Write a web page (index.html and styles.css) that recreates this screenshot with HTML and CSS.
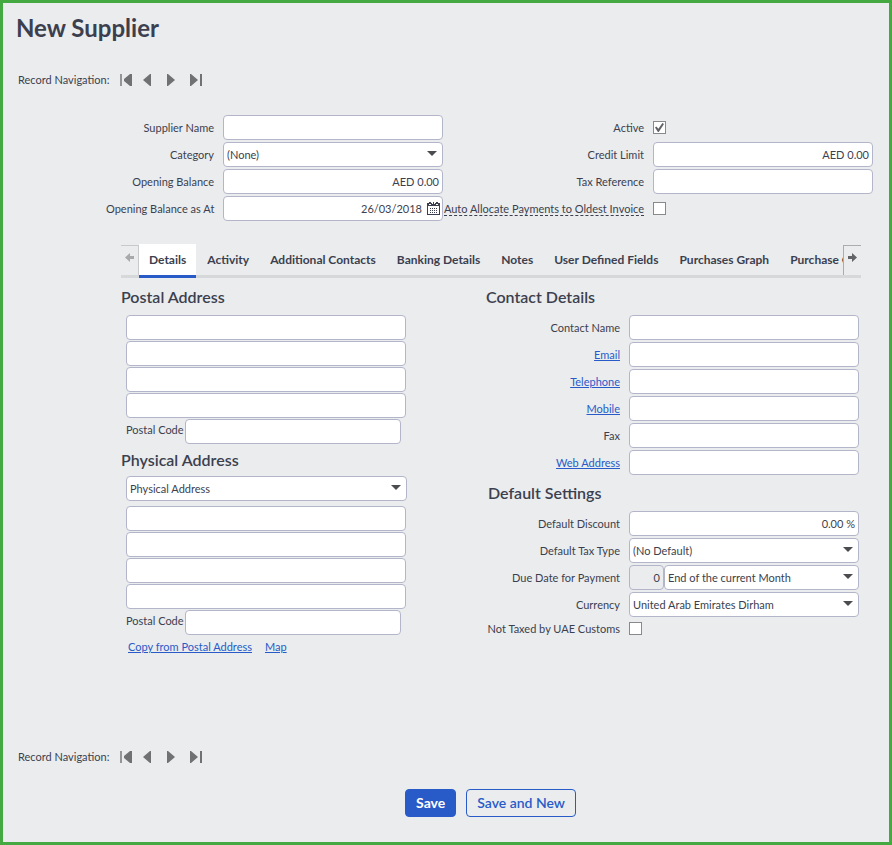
FILE: index.html
```html
<!DOCTYPE html>
<html lang="en">
<head>
<meta charset="utf-8">
<meta name="viewport" content="width=device-width, initial-scale=1">
<title>New Supplier</title>
<link rel="stylesheet" href="styles.css">
</head>
<body>
<svg class="sprite" aria-hidden="true">
  <symbol id="i-first" viewBox="0 0 14 12"><path opacity=".7" d="M2 0H0v12h2z"/><path d="M12 0v12h-2L4 7V5l6-5z"/></symbol>
  <symbol id="i-prev" viewBox="0 0 14 12"><path d="M8 0v12H7L0 6l7-6z"/></symbol>
  <symbol id="i-next" viewBox="0 0 14 12"><path d="M1 0v12h1l7-6-7-6z"/></symbol>
  <symbol id="i-last" viewBox="0 0 14 12"><path d="M1 0v12h1l7-6-7-6zM11 0h2v12h-2z"/></symbol>
</svg>
<main class="page">
  <h1>New Supplier</h1>

  <nav class="record-nav" aria-label="Record navigation, top">
    <span>Record Navigation:</span>
    <button type="button" aria-label="First"><svg><use href="#i-first"/></svg></button>
    <button type="button" aria-label="Previous"><svg><use href="#i-prev"/></svg></button>
    <button type="button" aria-label="Next"><svg><use href="#i-next"/></svg></button>
    <button type="button" aria-label="Last"><svg><use href="#i-last"/></svg></button>
  </nav>

  <form>
    <div class="summary">
      <label for="name">Supplier Name</label>
      <input id="name" type="text">
      <label for="active">Active</label>
      <input id="active" type="checkbox" checked>

      <label for="category">Category</label>
      <div class="select"><select id="category"><option>(None)</option></select></div>
      <label for="credit">Credit Limit</label>
      <input id="credit" class="num" type="text" value="AED 0.00">

      <label for="opening">Opening Balance</label>
      <input id="opening" class="num" type="text" value="AED 0.00">
      <label for="taxref">Tax Reference</label>
      <input id="taxref" type="text">

      <label for="asat">Opening Balance as At</label>
      <div class="date">
        <input id="asat" class="num" type="text" value="26/03/2018">
        <button type="button" aria-label="Choose date">
          <svg viewBox="0 0 13 13"><path fill-rule="evenodd" d="M0 1h2v2h2V1h1v1h3V1h1v2h2V1h2v12H0zM1 4v8h11V4z"/><path d="M2 0h2v2H2zM6 0h1v2H6zM9 0h2v2H9zM3 6h1v1H3zM5 6h1v1H5zM7 6h1v1H7zM9 6h1v1H9zM3 8h1v1H3zM5 8h1v1H5zM7 8h1v1H7zM9 8h1v1H9zM3 10h1v1H3zM5 10h1v1H5zM7 10h1v1H7zM9 10h1v1H9z"/></svg>
        </button>
      </div>
      <label for="auto"><span class="hint">Auto Allocate Payments to Oldest Invoice</span></label>
      <input id="auto" type="checkbox">
    </div>

    <div class="tabbar">
      <button type="button" class="scroll scroll-left" aria-label="Scroll tabs left" disabled><svg viewBox="0 0 9 9"><path d="M0 4.500 5 0v3h4v3H5v3z"/></svg></button>
      <div class="tabs" role="tablist">
        <button type="button" role="tab" aria-selected="true">Details</button>
        <button type="button" role="tab">Activity</button>
        <button type="button" role="tab">Additional Contacts</button>
        <button type="button" role="tab">Banking Details</button>
        <button type="button" role="tab">Notes</button>
        <button type="button" role="tab">User Defined Fields</button>
        <button type="button" role="tab">Purchases Graph</button>
        <button type="button" role="tab">Purchase Graph</button>
      </div>
      <button type="button" class="scroll scroll-right" aria-label="Scroll tabs right"><svg viewBox="0 0 9 9"><path d="M9 4.500 4 0v3H0v3h4v3z"/></svg></button>
    </div>

    <div class="panel">
      <div>
        <section>
          <h2>Postal Address</h2>
          <div class="address">
            <input type="text" aria-label="Postal address line 1">
            <input type="text" aria-label="Postal address line 2">
            <input type="text" aria-label="Postal address line 3">
            <input type="text" aria-label="Postal address line 4">
            <div class="code"><label for="pcode">Postal Code</label><input id="pcode" type="text"></div>
          </div>
        </section>
        <section class="physical">
          <h2>Physical Address</h2>
          <div class="address-type select"><select aria-label="Address type"><option>Physical Address</option></select></div>
          <div class="address">
            <input type="text" aria-label="Physical address line 1">
            <input type="text" aria-label="Physical address line 2">
            <input type="text" aria-label="Physical address line 3">
            <input type="text" aria-label="Physical address line 4">
            <div class="code"><label for="phcode">Postal Code</label><input id="phcode" type="text"></div>
          </div>
          <div class="links"><a href="#">Copy from Postal Address</a><a href="#">Map</a></div>
        </section>
      </div>

      <div>
        <section>
          <h2>Contact Details</h2>
          <div class="fields">
            <label for="contact">Contact Name</label><input id="contact" type="text">
            <label for="email"><a href="#">Email</a></label><input id="email" type="text">
            <label for="tel"><a href="#">Telephone</a></label><input id="tel" type="text">
            <label for="mobile"><a href="#">Mobile</a></label><input id="mobile" type="text">
            <label for="fax">Fax</label><input id="fax" type="text">
            <label for="web"><a href="#">Web Address</a></label><input id="web" type="text">
          </div>
        </section>
        <section class="defaults">
          <h2>Default Settings</h2>
          <div class="fields">
            <label for="discount">Default Discount</label><input id="discount" class="num" type="text" value="0.00 %">
            <label for="taxtype">Default Tax Type</label>
            <div class="select"><select id="taxtype"><option>(No Default)</option></select></div>
            <label for="due">Due Date for Payment</label>
            <div class="due">
              <input id="due" class="num" type="text" value="0" disabled>
              <div class="select"><select aria-label="Due date rule"><option>End of the current Month</option></select></div>
            </div>
            <label for="currency">Currency</label>
            <div class="select"><select id="currency"><option>United Arab Emirates Dirham</option></select></div>
            <label for="nottaxed">Not Taxed by UAE Customs</label><input id="nottaxed" type="checkbox">
          </div>
        </section>
      </div>
    </div>

    <nav class="record-nav" aria-label="Record navigation, bottom">
      <span>Record Navigation:</span>
      <button type="button" aria-label="First"><svg><use href="#i-first"/></svg></button>
      <button type="button" aria-label="Previous"><svg><use href="#i-prev"/></svg></button>
      <button type="button" aria-label="Next"><svg><use href="#i-next"/></svg></button>
      <button type="button" aria-label="Last"><svg><use href="#i-last"/></svg></button>
    </nav>

    <div class="actions">
      <button type="submit" class="btn primary">Save</button>
      <button type="button" class="btn">Save and New</button>
    </div>
  </form>
</main>
</body>
</html>
```
FILE: styles.css
```css
* { box-sizing: border-box; }

body {
  margin: 0;
  background: #eaecee;
  color: #3c3f4e;
  font: 11px/16px Lato, "Liberation Sans", sans-serif;
}

.sprite { position: absolute; width: 0; height: 0; }

.page {
  min-height: 100vh;
  border: 3px solid #43a940;
  padding: 8px 16px 24px 13px;
}

h1 { margin: 0 0 28px; font-size: 24px; line-height: 33px; font-weight: 700; }
h2 { margin: 0 0 8px; font-size: 16px; line-height: 20px; font-weight: 600; }

button, input, select { font: inherit; color: inherit; margin: 0; }
button { padding: 0; border: 0; background: none; cursor: pointer; }
a { color: #285bc8; text-decoration: underline; }

.record-nav { display: flex; align-items: center; padding-left: 2px; }
.record-nav span { margin-right: 11px; }
.record-nav button { display: flex; margin-right: 9px; }
.record-nav svg { width: 14px; height: 12px; fill: #707173; }

input[type="text"], select {
  display: block;
  width: 100%;
  min-width: 0;
  height: 25px;
  padding: 0 3px;
  border: 1px solid #b3b5ca;
  border-radius: 4px;
  background: #fff;
}
input[type="text"]:disabled { background: #eaecee; }
.num { text-align: right; }

input[type="checkbox"] {
  appearance: none;
  display: block;
  width: 13px;
  height: 13px;
  border: 1px solid #88898b;
  background: #fff;
}
input[type="checkbox"]:checked::before {
  content: "";
  display: block;
  width: 9px;
  height: 9px;
  margin: 1px;
  background: #626366;
  clip-path: polygon(0 50%, 15% 40%, 38% 65%, 82% 0, 100% 12%, 42% 100%, 32% 100%);
}

.select { position: relative; min-width: 0; }
.select select { appearance: none; }
.select::after {
  content: "";
  position: absolute;
  right: 6px;
  top: 9px;
  border: 5px solid transparent;
  border-top-color: #4b4c50;
  border-bottom: 0;
  pointer-events: none;
}

.summary {
  display: grid;
  grid-template-columns: 117px 1fr 210px 1fr;
  row-gap: 2px;
  grid-auto-rows: 25px;
  align-items: center;
  margin: 27px 0 0 90px;
}
.summary label, .fields label { padding-right: 9px; text-align: right; white-space: nowrap; }
.hint { border-bottom: 1px dashed #3c3f4e; }

.date { position: relative; }
.date input { padding-right: 20px; }
.date button { position: absolute; right: 3px; top: 6px; display: flex; }
.date svg { width: 13px; height: 13px; fill: #3c3f4e; }

.tabbar {
  display: flex;
  height: 34px;
  margin: 23px 12px 0 105px;
  border-bottom: 3px solid #d7d8da;
}
.tabs {
  display: flex;
  flex: 1;
  column-gap: 1px;
  min-width: 0;
  margin-bottom: -3px;
  overflow: hidden;
}
.tabs button {
  flex: none;
  padding: 0 10px;
  border-bottom: 3px solid transparent;
  font-size: 12px;
  font-weight: 700;
}
.tabs button[aria-selected="true"] { background: #fff; border-bottom-color: #285bc8; }
.scroll {
  flex: none;
  display: flex;
  justify-content: center;
  width: 18px;
  margin-top: 1px;
  padding-top: 7px;
  border-top: 1px solid #aaacae;
}
.scroll svg { width: 9px; height: 9px; fill: #626366; }
.scroll-left { border-right: 1px solid #c8c9cb; border-top-color: #c8c9cb; }
.scroll-left svg { fill: #a8a9ab; }
.scroll-right { border-left: 1px solid #aaacae; }

.panel {
  display: grid;
  grid-template-columns: 286fr 373fr;
  column-gap: 79px;
  margin: 9px 14px 94px 105px;
}
.physical { margin-top: 6px; }
.physical h2 { margin-bottom: 6px; }
.defaults { margin-top: 8px; }
.defaults h2 { padding-left: 2px; }
.defaults input[type="checkbox"] { margin: 3px 0; }
.address { display: grid; row-gap: 1px; padding: 0 1px 0 5px; }
.address-type { margin: 0 0 5px 5px; }
.code { display: flex; column-gap: 1px; padding-right: 5px; }
.code label { flex: none; line-height: 22px; }
.links { display: flex; column-gap: 13px; margin: 4px 0 0 7px; }

.fields {
  display: grid;
  grid-template-columns: 143px 1fr;
  row-gap: 2px;
  align-items: center;
}
.due { display: grid; grid-template-columns: 35px 1fr; }

.actions {
  display: flex;
  justify-content: center;
  column-gap: 10px;
  margin-top: 24px;
  padding-left: 92px;
}
.btn {
  height: 28px;
  padding: 0 10px;
  border: 1px solid #285bc8;
  border-radius: 4px;
  color: #285bc8;
  font-size: 14px;
  font-weight: 600;
}
.btn.primary { background: #285bc8; color: #fff; font-weight: 700; }
```
